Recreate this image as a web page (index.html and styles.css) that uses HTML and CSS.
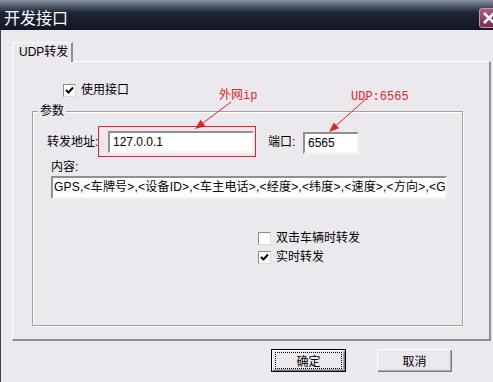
FILE: index.html
```html
<!DOCTYPE html>
<html lang="zh">
<head>
    <meta charset="UTF-8">
    <title>开发接口</title>
    <link rel="stylesheet" href="styles.css">
</head>
<body>
    <div class="window">
        <div class="titlebar">
            <span class="title">开发接口</span>
            <span class="close">
                <svg width="21" height="20" viewBox="0 0 21 20"><path d="M5 5 L15 15 M15 5 L5 15" stroke="#fff" stroke-width="2.6"/></svg>
            </span>
        </div>
        <div class="client">
            <div class="tabstrip"><div class="tab">UDP转发</div></div>
            <div class="pane">
                <div class="check use"><span class="box"><svg width="11" height="11" viewBox="0 0 11 11"><path d="M2 5 L4.5 7.5 L9 2.5" fill="none" stroke="#000" stroke-width="2"/></svg></span>使用接口</div>
                <fieldset class="group">
                    <legend>参数</legend>
                    <div class="addr">
                        <span class="lbl">转发地址:</span>
                        <div class="mark"><div class="field ip">127.0.0.1</div></div>
                        <span class="lbl port-lbl">端口:</span>
                        <div class="field port">6565</div>
                    </div>
                    <div class="content-lbl">内容:</div>
                    <div class="field content">GPS,&lt;车牌号&gt;,&lt;设备ID&gt;,&lt;车主电话&gt;,&lt;经度&gt;,&lt;纬度&gt;,&lt;速度&gt;,&lt;方向&gt;,&lt;GPS时间&gt;</div>
                    <div class="opts">
                        <div class="check"><span class="box"></span>双击车辆时转发</div>
                        <div class="check"><span class="box"><svg width="11" height="11" viewBox="0 0 11 11"><path d="M2 5 L4.5 7.5 L9 2.5" fill="none" stroke="#000" stroke-width="2"/></svg></span>实时转发</div>
                    </div>
                </fieldset>
            </div>
            <div class="buttons">
                <div class="btn default"><span class="focus">确定</span></div>
                <div class="btn">取消</div>
            </div>
        </div>

        <!-- annotations drawn over the dialog -->
        <div class="note note-ip">外网ip</div>
        <div class="note note-port">UDP:6565</div>
        <svg class="arrows" width="493" height="382" viewBox="0 0 493 382">
            <line x1="231" y1="102" x2="201" y2="124.5" stroke="#e3232a" stroke-width="1"/>
            <polygon points="195,129 205.4,126.2 200.6,119.8" fill="#e3232a"/>
            <line x1="366" y1="99" x2="335" y2="126.5" stroke="#e3232a" stroke-width="1"/>
            <polygon points="329,132 339.1,128.3 333.8,122.4" fill="#e3232a"/>
        </svg>
    </div>
</body>
</html>
```

FILE: styles.css
```css
body {
    margin: 0;
}

.window {
    position: relative;
    width: 493px;
    height: 382px;
    overflow: hidden;
    background-color: #ebe9ed;
    box-shadow: inset 1px 0 #3c414b;
    font: 12px "Liberation Sans", "Noto Sans CJK SC", sans-serif;
    color: #000;
}

.titlebar {
    height: 30px;
    display: flex;
    justify-content: space-between;
    background: linear-gradient(#8a96a3 0, #4d5869 6px, #1d2433 13px, #111726 30px);
}

.title {
    color: #fff;
    font-family: "Noto Sans CJK SC", sans-serif;
    font-size: 16px;
    line-height: 16px;
    margin: 9px 0 0 4px;
}

.close {
    width: 21px;
    height: 20px;
    margin: 8px -7px 0 0;
    box-sizing: border-box;
    border: 1px solid #c99aae;
    border-radius: 3px;
    background: linear-gradient(#b05a7c, #7a2c4c);
    display: flex;
}

.close svg {
    margin: -1px;
}

.client {
    padding: 12px 2px 0 12px;
}

.tabstrip {
    display: flex;
}

.tab {
    position: relative;
    z-index: 1;
    width: 61px;
    height: 20px;
    box-sizing: border-box;
    margin-bottom: -1px;
    padding-left: 6px;
    line-height: 19px;
    background-color: #ebe9ed;
    border-left: 1px solid #fff;
    border-top: 1px solid #fff;
    border-right: 2px solid #8f8e93;
}

.pane {
    height: 280px;
    box-sizing: border-box;
    border-left: 1px solid #fff;
    border-top: 1px solid #fff;
    border-right: 2px solid #8f8e93;
    border-bottom: 2px solid #8f8e93;
    padding: 22px 0 0 19px;
}

.check {
    display: flex;
    align-items: center;
    gap: 5px;
    line-height: 13px;
}

.check.use {
    margin-left: 31px;
}

.box {
    width: 13px;
    height: 13px;
    box-sizing: border-box;
    background-color: #fff;
    border: 1px solid;
    border-color: #8a8a8f #dcdcdf #dcdcdf #8a8a8f;
    display: flex;
}

.group {
    margin: 7px 0 0 0;
    padding: 0;
    width: 431px;
    height: 222px;
    box-sizing: border-box;
    border: 1px solid #a09fa4;
    box-shadow: 1px 1px #fff, inset 1px 1px #fff;
    min-width: 0;
}

.group legend {
    margin-left: 5px;
    padding: 0 2px;
    line-height: 14px;
    background-color: #ebe9ed;
}

.addr {
    display: flex;
    align-items: flex-start;
    margin-top: 8px;
}

.lbl {
    width: 51px;
    margin: 9px 0 0 14px;
    line-height: 14px;
    white-space: nowrap;
}

.mark {
    border: 1px solid #e3232a;
    padding: 4px 1px 3px 9px;
}

.field {
    height: 22px;
    box-sizing: border-box;
    background-color: #fff;
    border: 2px solid;
    border-color: #8f8f94 #f4f4f6 #f4f4f6 #8f8f94;
    padding-left: 3px;
    line-height: 18px;
    white-space: nowrap;
    overflow: hidden;
}

.ip {
    width: 146px;
}

.port-lbl {
    width: 35px;
    margin-left: 12px;
}

.port {
    width: 56px;
    margin-top: 6px;
}

.content-lbl {
    margin: 3px 0 0 18px;
    line-height: 14px;
}

.content {
    width: 396px;
    height: 23px;
    margin: 2px 0 0 18px;
    padding-left: 1px;
    letter-spacing: 0.2px;
}

.opts {
    margin: 33px 0 0 225px;
    display: flex;
    flex-direction: column;
    gap: 6px;
}

.buttons {
    display: flex;
    justify-content: flex-end;
    gap: 31px;
    margin-top: 8px;
    padding-right: 39px;
}

.btn {
    width: 75px;
    height: 23px;
    box-sizing: border-box;
    display: flex;
    align-items: center;
    justify-content: center;
    box-shadow: inset 1px 1px #fff, inset -1px -1px #7d7c80, inset -2px -2px #a9a8ac;
}

.btn.default {
    border: 1px solid #000;
    align-items: stretch;
}

.focus {
    flex: 1;
    margin: 2px 3px;
    border: 1px dotted #000;
    display: flex;
    align-items: center;
    justify-content: center;
}

.note {
    position: absolute;
    color: #e3232a;
    font: 12px "Liberation Mono", "Noto Sans CJK SC", monospace;
    line-height: 16px;
}

.note-ip {
    left: 219px;
    top: 88px;
}

.note-port {
    left: 351px;
    top: 89px;
}

.arrows {
    position: absolute;
    left: 0;
    top: 0;
    pointer-events: none;
}
```
